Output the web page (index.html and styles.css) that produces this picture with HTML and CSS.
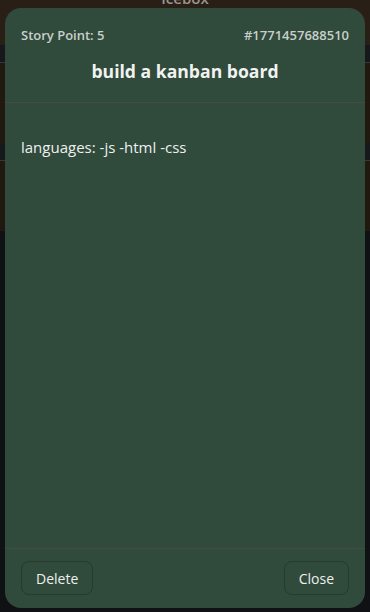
FILE: index.html
```html
<!DOCTYPE html>
<html>
<head>
<meta charset="utf-8">
<link rel="stylesheet" href="styles.css">
</head>
<body>
<div class="page">
  <div class="col-head"><span class="col-title">Icebox</span></div>
  <div class="band dark"></div>
  <div class="band brown tall"></div>
  <div class="band dark"></div>
  <div class="band brown mid"></div>
  <div class="band dark rest"></div>
</div>
<div class="modal">
  <div class="modal-head">
    <div class="meta">
      <span>Story Point: 5</span>
      <span>#1771457688510</span>
    </div>
    <h2 class="title">build a kanban board</h2>
  </div>
  <div class="modal-body">
    <p class="desc">languages: -js -html -css</p>
  </div>
  <div class="modal-foot">
    <button class="btn">Delete</button>
    <button class="btn">Close</button>
  </div>
</div>
</body>
</html>
```
FILE: styles.css
```css
* { box-sizing: border-box; }
html, body { margin: 0; padding: 0; }
body {
  width: 370px;
  height: 612px;
  overflow: hidden;
  background: #0d0e10;
  font-family: "Open Sans", "Noto Sans", sans-serif;
  position: relative;
}
.page {
  display: flex;
  flex-direction: column;
  height: 612px;
}
.col-head {
  height: 45px;
  flex: none;
  background: #2a1f17;
  text-align: center;
  overflow: hidden;
}
.col-title {
  display: block;
  color: #9a9590;
  font-size: 15px;
  font-weight: 600;
  line-height: 14px;
  margin-top: -9px;
}
.band { flex: none; }
.band.dark { height: 18px; background: #16181c; border-bottom: 1px solid #3b3734; }
.band.brown { background: #21180f; }
.band.tall { height: 80px; }
.band.mid { height: 70px; }
.band.rest { flex: 1; background: #101114; border-bottom: none; }
.modal {
  position: absolute;
  left: 5px;
  top: 8px;
  width: 360px;
  height: 600px;
  background: #304a3c;
  border-radius: 16px;
  display: flex;
  flex-direction: column;
  color: #e8ece8;
}
.modal-head {
  padding: 18px 16px 18px;
  border-bottom: 1px solid #464a4b;
}
.meta {
  display: flex;
  justify-content: space-between;
  font-size: 13px;
  font-weight: 600;
  line-height: 18px;
  color: #c9cfca;
}
.title {
  margin: 14px 0 0;
  font-size: 17.6px;
  font-weight: 700;
  line-height: 26px;
  text-align: center;
  color: #f1f3f1;
}
.modal-body {
  flex: 1;
  padding: 34px 16px;
}
.desc {
  margin: 0;
  font-size: 15px;
  line-height: 20px;
  color: #eef0ee;
}
.modal-foot {
  border-top: 1px solid #464a4b;
  padding: 12px 16px 13px;
  display: flex;
  justify-content: space-between;
}
.btn {
  height: 34px;
  padding: 0 14px;
  background: transparent;
  border: 1px solid #263a2f;
  border-radius: 8px;
  color: #eef0ee;
  font-family: "Open Sans", "Noto Sans", sans-serif;
  font-size: 14px;
}
```
